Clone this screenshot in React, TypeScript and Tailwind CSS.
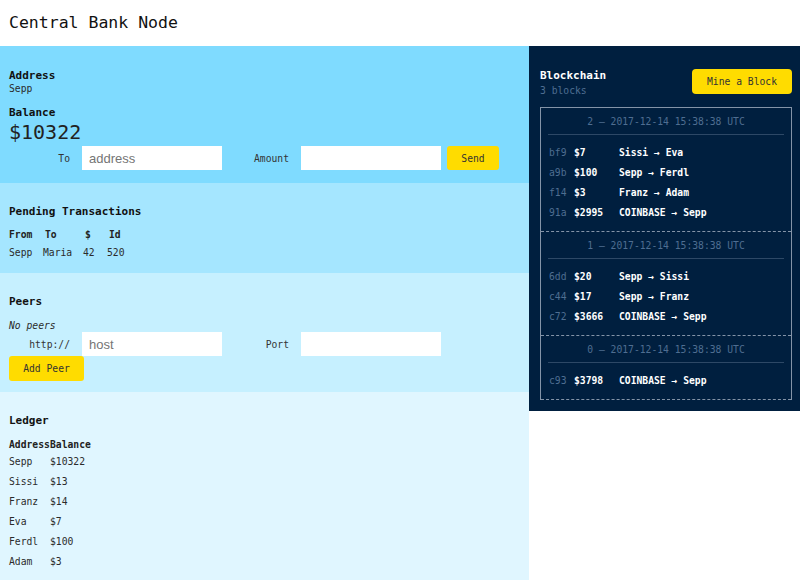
import React from "react";

// Central bank node dashboard: wallet, pending txs, peers, ledger + blockchain panel
const mono = "font-['DejaVu_Sans_Mono',monospace]";

const pending = [{ from: "Sepp", to: "Maria", amount: 42, id: 520 }];

const ledger = [
  { address: "Sepp", balance: 10322 },
  { address: "Sissi", balance: 13 },
  { address: "Franz", balance: 14 },
  { address: "Eva", balance: 7 },
  { address: "Ferdl", balance: 100 },
  { address: "Adam", balance: 3 },
];

const blocks = [
  {
    index: 2,
    time: "2017-12-14 15:38:38 UTC",
    txs: [
      { hash: "bf9", amount: 7, from: "Sissi", to: "Eva" },
      { hash: "a9b", amount: 100, from: "Sepp", to: "Ferdl" },
      { hash: "f14", amount: 3, from: "Franz", to: "Adam" },
      { hash: "91a", amount: 2995, from: "COINBASE", to: "Sepp" },
    ],
  },
  {
    index: 1,
    time: "2017-12-14 15:38:38 UTC",
    txs: [
      { hash: "6dd", amount: 20, from: "Sepp", to: "Sissi" },
      { hash: "c44", amount: 17, from: "Sepp", to: "Franz" },
      { hash: "c72", amount: 3666, from: "COINBASE", to: "Sepp" },
    ],
  },
  {
    index: 0,
    time: "2017-12-14 15:38:38 UTC",
    txs: [{ hash: "c93", amount: 3798, from: "COINBASE", to: "Sepp" }],
  },
];

function Heading({ children }: { children: React.ReactNode }) {
  return <h3 className="text-[11px] leading-[13px] font-bold text-[#111]">{children}</h3>;
}

function Field({ label, labelWidth, placeholder }: { label: string; labelWidth: string; placeholder?: string }) {
  return (
    <>
      <span className={`${labelWidth} text-right pr-[12px] text-[#333]`}>{label}</span>
      <input
        placeholder={placeholder}
        className="w-[140px] h-[24px] bg-white px-[7px] text-[13px] font-['Liberation_Sans',Arial,sans-serif] text-[#333] placeholder:text-[#757575] outline-none"
      />
    </>
  );
}

export default function App() {
  return (
    <div className={`${mono} w-[800px] min-h-[580px] bg-white text-[9.7px] leading-[13px] text-[#2b2b2b]`}>
      {/* Header */}
      <header className="h-[46px] flex items-center px-[9px]">
        <h1 className="text-[16.5px] leading-[20px] text-[#111] font-normal">Central Bank Node</h1>
      </header>

      <div className="flex items-start">
        {/* Left column */}
        <div className="w-[529px] flex flex-col">
          {/* Wallet */}
          <section className="bg-[#7fdbff] px-[9px] pt-[23px] pb-[13px]">
            <Heading>Address</Heading>
            <div>Sepp</div>
            <div className="mt-[11px]">
              <Heading>Balance</Heading>
            </div>
            <div className="mt-[1px] text-[20px] leading-[24px] text-[#222]">$10322</div>
            <div className="mt-[2px] flex items-center">
              <Field label="To" labelWidth="w-[73px]" placeholder="address" />
              <Field label="Amount" labelWidth="w-[79px]" />
              <button className="ml-[6px] w-[52px] h-[24px] rounded-[3px] bg-[#ffdc00] text-[#333]">Send</button>
            </div>
          </section>

          {/* Pending */}
          <section className="bg-[#a5e6ff] px-[9px] pt-[22px] pb-[14px]">
            <Heading>Pending Transactions</Heading>
            <div className="mt-[10px] flex h-[13px] font-bold text-[#222]">
              <span className="w-[34px]">From</span>
              <span className="w-[40px] pl-[2px]">To</span>
              <span className="w-[24px] pl-[2px]">$</span>
              <span className="pl-[2px]">Id</span>
            </div>
            {pending.map((p) => (
              <div key={p.id} className="mt-[5px] flex h-[13px]">
                <span className="w-[34px]">{p.from}</span>
                <span className="w-[40px]">{p.to}</span>
                <span className="w-[24px]">{p.amount}</span>
                <span>{p.id}</span>
              </div>
            ))}
          </section>

          {/* Peers */}
          <section className="bg-[#c6f0ff] px-[9px] pt-[22px] pb-[11px]">
            <Heading>Peers</Heading>
            <div className="mt-[11px] italic">No peers</div>
            <div className="flex items-center">
              <Field label="http://" labelWidth="w-[73px]" placeholder="host" />
              <Field label="Port" labelWidth="w-[79px]" />
            </div>
            <button className="w-[75px] h-[25px] rounded-[3px] bg-[#ffdc00] text-[#333]">Add Peer</button>
          </section>

          {/* Ledger */}
          <section className="bg-[#e0f6ff] px-[9px] pt-[22px] pb-[12px]">
            <Heading>Ledger</Heading>
            <div className="mt-[11px] flex h-[13px] font-bold text-[#222]">
              <span className="w-[41px]">Address</span>
              <span>Balance</span>
            </div>
            {ledger.map((l) => (
              <div key={l.address} className="flex items-center h-[20px]">
                <span className="w-[41px]">{l.address}</span>
                <span>${l.balance}</span>
              </div>
            ))}
          </section>
        </div>

        {/* Blockchain panel */}
        <aside className="flex-1 bg-[#001f3f] pl-[11px] pr-[8px] pt-[23px] pb-[11px]">
          <div className="flex justify-between items-start h-[28px]">
            <div>
              <h3 className="text-[11px] leading-[13px] font-bold text-white">Blockchain</h3>
              <div className="mt-[2px] text-[#4f6e91]">3 blocks</div>
            </div>
            <button className="w-[100px] h-[25px] rounded-[4px] bg-[#ffdc00] text-[#333]">Mine a Block</button>
          </div>

          <div className="mt-[10px] border-t border-x border-[#8494a8]">
            {blocks.map((b) => (
              <div key={b.index} className="border-b border-dashed border-[#8494a8] pb-[9px]">
                <div className="pt-[7px] pb-[6px] text-center text-[#4f6e91]">
                  {b.index} — {b.time}
                </div>
                <div className="mx-[7px] h-px bg-[#2d4866]" />
                <div className="mt-[7px]">
                  {b.txs.map((t) => (
                    <div key={t.hash} className="flex items-center h-[20px] pl-[8px]">
                      <span className="w-[25px] text-[#4f6e91]">{t.hash}</span>
                      <span className="w-[45px] font-bold text-white">${t.amount}</span>
                      <span className="font-bold text-white">
                        {t.from} → {t.to}
                      </span>
                    </div>
                  ))}
                </div>
              </div>
            ))}
          </div>
        </aside>
      </div>
    </div>
  );
}
